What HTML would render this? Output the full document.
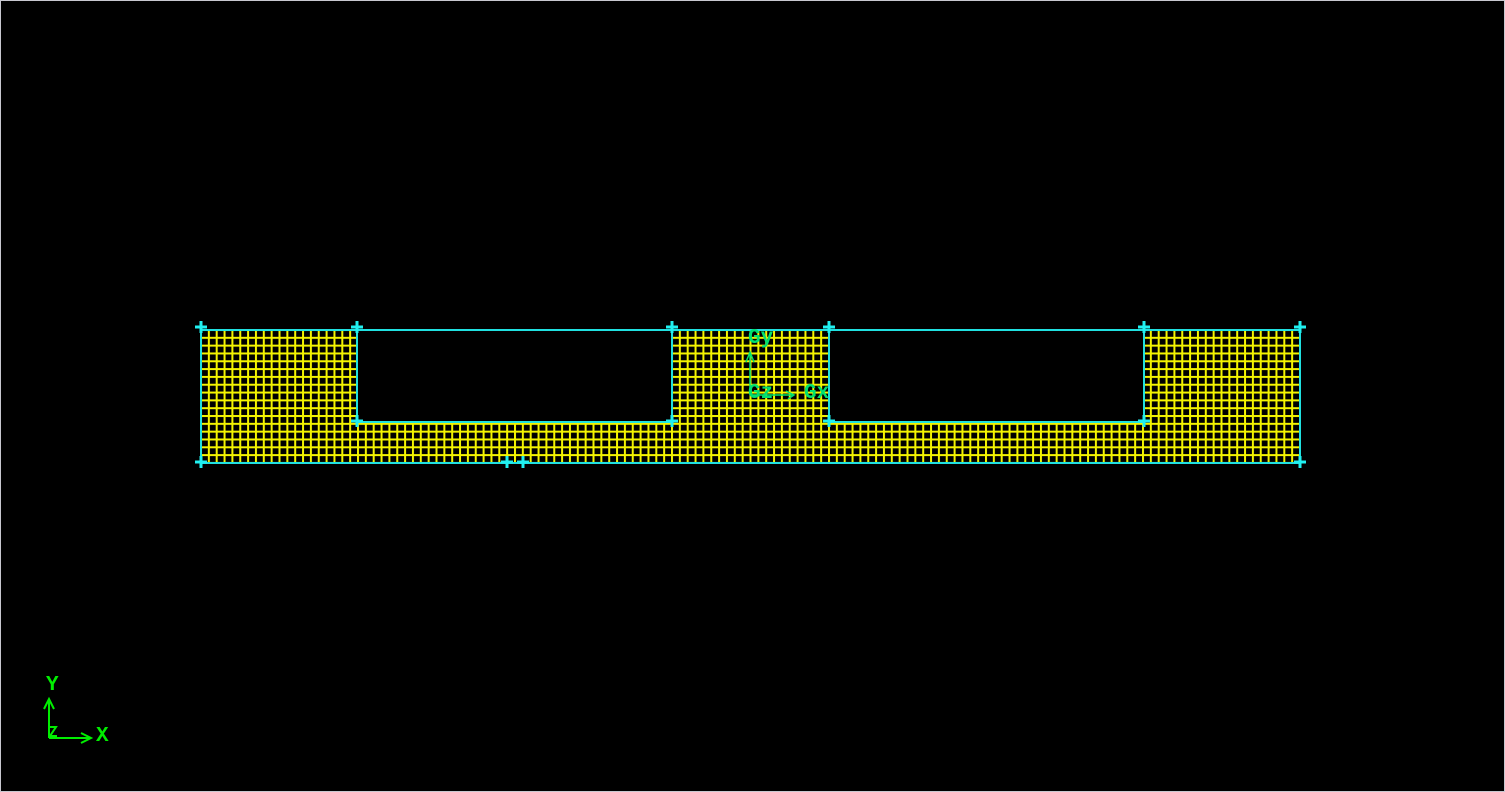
<!DOCTYPE html>
<html><head><style>
html,body{margin:0;padding:0;background:#000;width:1505px;height:792px;overflow:hidden}
svg{display:block}
text{font-family:"Liberation Mono",monospace;font-weight:bold}
</style></head><body>
<svg width="1505" height="792" viewBox="0 0 1505 792">
<rect x="0" y="0" width="1505" height="792" fill="#000"/>
<rect x="0.5" y="0.5" width="1504" height="791" fill="none" stroke="#c8c8d0" stroke-width="1"/>
<defs>
<pattern id="g" x="200" y="329" width="7.85" height="7.82" patternUnits="userSpaceOnUse">
<rect x="0" y="0" width="2" height="7.82" fill="#f4f400"/>
<rect x="0" y="0" width="7.85" height="2" fill="#f4f400"/>
</pattern>
</defs>
<path d="M201 330H357V422H672V330H829V422H1144V330H1300V463H201Z" fill="url(#g)"/>
<path d="M201 330H1300V463H201Z M357 330V422H672V330 M829 330V422H1144V330" fill="none" stroke="#20e0e0" stroke-width="2"/>
<g stroke="#20f0f0" stroke-width="3">
<path d="M195 327h12M201 321v12 M351 327h12M357 321v12 M666 327h12M672 321v12 M823 327h12M829 321v12 M1138 327h12M1144 321v12 M1294 327h12M1300 321v12
M351 421h12M357 415v12 M666 421h12M672 415v12 M823 421h12M829 415v12 M1138 421h12M1144 415v12
M195 462h12M201 456v12 M1294 462h12M1300 456v12 M501 462h12M507 456v12 M517 462h12M523 456v12"/>
</g>
<g fill="#00e070" stroke="#00e070">
<path d="M750 395V352 M746 362l4-10 4 10 M750 395H793 M786 391l8 4-6 4" stroke-width="1.5" fill="none"/>
<text x="748" y="343" font-size="21" stroke="none">Gy</text>
<text x="748" y="398" font-size="21" stroke="none">Gz</text>
<text x="804" y="398" font-size="21" stroke="none">Gx</text>
</g>
<g stroke="#00ee00" stroke-width="2" fill="none">
<path d="M49 738V699 M44 709l5-10 5 10 M49 738H91 M81 733l10 5-10 5 M50 727h6l-6 9h7"/>
</g>
<text x="46" y="690" font-size="21" fill="#00ee00">Y</text>
<text x="96" y="741" font-size="21" fill="#00ee00">X</text>
</svg>
</body></html>
